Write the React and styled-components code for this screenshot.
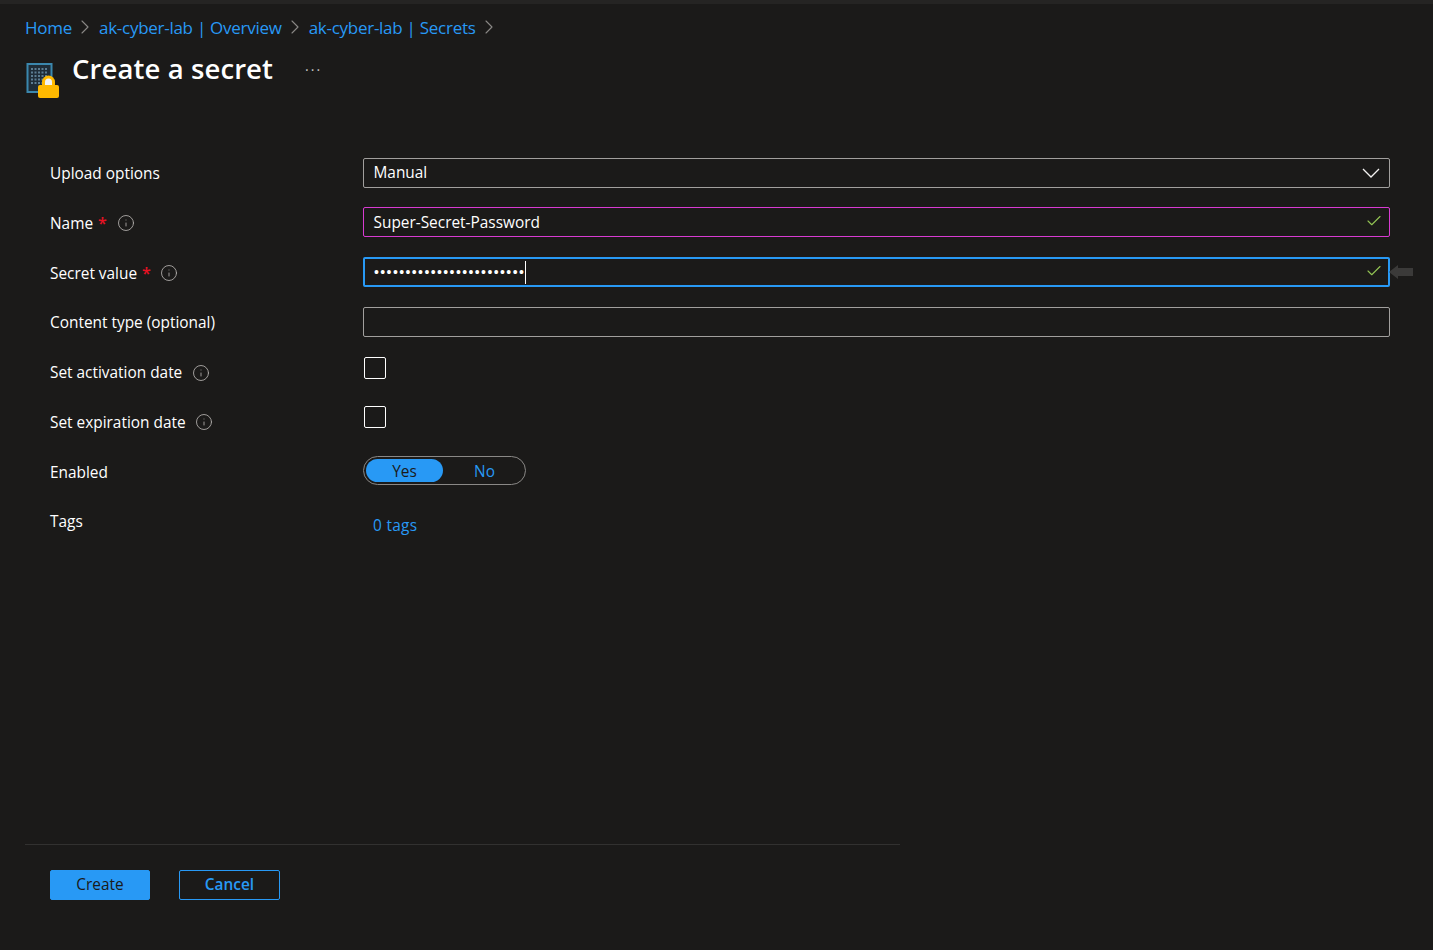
import React from 'react'
import styled, { createGlobalStyle } from 'styled-components'
import { ChevronRight, Check, Info } from 'lucide-react'

const GlobalStyle = createGlobalStyle`
  html, body {
    margin: 0;
    padding: 0;
    background: #1b1a19;
  }

  body {
    font-family: 'Open Sans', 'Noto Sans', 'Liberation Sans', sans-serif;
    color: #fff;
  }
`

const Page = styled.div`
  width: 1433px;
  height: 950px;
  display: flex;
  flex-direction: column;
  overflow: hidden;
  background: #1b1a19;
  border-top: 4px solid #252423;
  box-sizing: border-box;
`

const Breadcrumbs = styled.nav`
  display: flex;
  align-items: center;
  height: 24px;
  margin: 11px 0 0 25px;
  font-size: 17px;
  letter-spacing: -0.27px;
`

const Crumb = styled.a`
  color: #2899f5;
`

const CrumbArrow = styled(ChevronRight)`
  width: 24px;
  height: 24px;
  margin: 0 1.5px;
  color: #8a8886;
  stroke-width: 1.1;
`

const Header = styled.header`
  display: flex;
  align-items: flex-start;
  height: 56px;
  margin: 10px 0 0 25px;
`

const BladeIcon = styled.svg`
  width: 36px;
  height: 38px;
  margin-top: 13px;
  flex: none;
`

const Title = styled.h1`
  margin: 0 0 0 11px;
  font-size: 27.5px;
  line-height: 39px;
  font-weight: 600;
  letter-spacing: 0.1px;
`

const MoreDots = styled.span`
  margin: 7px 0 0 32px;
  font-size: 14px;
  letter-spacing: 2px;
  line-height: 20px;
  color: #c8c6c4;
`

const Form = styled.form`
  display: grid;
  grid-template-columns: 313px 1027px;
  grid-auto-rows: 30px;
  row-gap: 19.75px;
  margin: 52.5px 0 0 50px;
`

const Label = styled.div`
  display: flex;
  align-items: center;
  height: 30px;
  box-sizing: border-box;
  padding-top: 2px;
  font-size: 15.4px;
  color: #fff;
`

const Required = styled.span`
  margin: 0 0 0 5px;
  color: #e81123;
  font-size: 16px;
  line-height: 16px;
  font-weight: 600;
`

const InfoIcon = styled(Info)`
  width: 18px;
  height: 18px;
  margin-left: ${(p) => p.$gap || 9}px;
  color: #b3b0ad;
  stroke-width: 1.15;
`

const Field = styled.div`
  position: relative;
  display: flex;
  align-items: center;
  justify-content: space-between;
  height: 30px;
  box-sizing: border-box;
  padding: 0 6px 0 9.5px;
  border-radius: 2px;
  font-size: 15.4px;
  border: 1px solid ${(p) => p.$border || '#a19f9d'};
  ${(p) => p.$focused && 'border-width: 2px; padding-left: 9px; padding-right: 5px;'}
`

const Dots = styled.span`
  display: flex;
  align-items: center;
  font-family: 'Liberation Sans', sans-serif;
  font-size: 14px;
  letter-spacing: 1.4px;
`

const Caret = styled.span`
  width: 1px;
  height: 23px;
  margin-left: 0;
  background: #fff;
`

const ValidIcon = styled(Check)`
  width: 18px;
  height: 18px;
  margin-top: -3px;
  color: #92c353;
  stroke-width: 1.5;
`

const SelectChevron = styled.svg`
  width: 18px;
  height: 10px;
  margin-right: 3px;
  fill: none;
  stroke: #f3f2f1;
  stroke-width: 1.3;
`

const HintArrow = styled.svg`
  position: absolute;
  left: 100%;
  top: 6px;
  width: 26px;
  height: 14px;
  margin-left: 1px;
`

const CheckBox = styled.div`
  width: 22px;
  height: 22px;
  box-sizing: border-box;
  margin-left: 1px;
  border: 1px solid #fff;
  border-radius: 2px;
`

const Toggle = styled.div`
  display: flex;
  align-items: center;
  width: 163px;
  height: 29px;
  box-sizing: border-box;
  padding: 2px;
  border: 1px solid #8a8886;
  border-radius: 15px;
  font-size: 15.4px;
`

const ToggleOption = styled.div`
  display: flex;
  align-items: center;
  justify-content: center;
  flex: ${(p) => (p.$active ? '0 0 77px' : '1')};
  height: 23px;
  padding-top: 1px;
  padding-left: ${(p) => (p.$active ? 0 : 3)}px;
  box-sizing: border-box;
  border-radius: 12px;
  color: ${(p) => (p.$active ? '#1b1a19' : '#2899f5')};
  background: ${(p) => (p.$active ? '#2899f5' : 'transparent')};
`

const TagsLink = styled.a`
  display: block;
  margin: 9px 0 0 10px;
  font-size: 15.4px;
  line-height: 22px;
  letter-spacing: 0.3px;
  color: #2899f5;
`

const Footer = styled.footer`
  width: 875px;
  margin: auto 0 50px 25px;
  border-top: 1px solid #323130;
`

const Actions = styled.div`
  display: flex;
  gap: 29px;
  padding: 25px 0 0 25px;
`

const Button = styled.button`
  width: ${(p) => (p.$primary ? 100 : 101)}px;
  height: 30px;
  padding: 0 0 2px;
  border: 1px solid #2899f5;
  border-radius: 2px;
  font-family: inherit;
  font-size: 15.4px;
  font-weight: ${(p) => (p.$primary ? 400 : 600)};
  color: ${(p) => (p.$primary ? '#1b1a19' : '#2899f5')};
  background: ${(p) => (p.$primary ? '#2899f5' : 'transparent')};
`

const KeyVaultLock = () => (
  <BladeIcon viewBox="0 0 36 38">
    <rect x="2.5" y="2" width="24" height="28" fill="#1f2d38" stroke="#3b87ad" strokeWidth="2" />
    {[6, 9.5, 13, 16.5, 20].map((y) =>
      [6, 9.5, 13, 16.5, 20].map((x) => (
        <rect key={`${x}-${y}`} x={x} y={y} width="2" height="2" fill="#5c7d92" />
      ))
    )}
    <path d="M17 24v-4a6.5 6.5 0 0 1 13 0v4z" fill="#ffb900" />
    <path d="M20 24v-4a3.5 3.5 0 0 1 7 0v4z" fill="#f2f2f2" />
    <rect x="13" y="23" width="21" height="13" rx="2" fill="#ffb900" />
  </BladeIcon>
)

const App = () => (
  <Page>
    <GlobalStyle />
    <Breadcrumbs>
      <Crumb>Home</Crumb>
      <CrumbArrow />
      <Crumb>ak-cyber-lab | Overview</Crumb>
      <CrumbArrow />
      <Crumb>ak-cyber-lab | Secrets</Crumb>
      <CrumbArrow />
    </Breadcrumbs>

    <Header>
      <KeyVaultLock />
      <Title>Create a secret</Title>
      <MoreDots>...</MoreDots>
    </Header>

    <Form>
      <Label>Upload options</Label>
      <Field>
        Manual
        <SelectChevron viewBox="0 0 18 10">
          <path d="M1 1l8 8 8-8" />
        </SelectChevron>
      </Field>

      <Label>
        Name<Required>*</Required>
        <InfoIcon $gap={10} />
      </Label>
      <Field $border="#d83bd2">
        Super-Secret-Password
        <ValidIcon />
      </Field>

      <Label>
        Secret value<Required>*</Required>
        <InfoIcon $gap={9} />
      </Label>
      <Field $focused $border="#2899f5">
        <Dots>
          {'•'.repeat(24)}
          <Caret />
        </Dots>
        <ValidIcon />
        <HintArrow viewBox="0 0 26 14">
          <path d="M0 7 9 0v3h15v8H9v3z" fill="#3b3a39" />
        </HintArrow>
      </Field>

      <Label>Content type (optional)</Label>
      <Field />

      <Label>
        Set activation date
        <InfoIcon $gap={10} />
      </Label>
      <div>
        <CheckBox />
      </div>

      <Label>
        Set expiration date
        <InfoIcon />
      </Label>
      <div>
        <CheckBox />
      </div>

      <Label>Enabled</Label>
      <Toggle>
        <ToggleOption $active>Yes</ToggleOption>
        <ToggleOption>No</ToggleOption>
      </Toggle>

      <Label>Tags</Label>
      <TagsLink>0 tags</TagsLink>
    </Form>

    <Footer>
      <Actions>
        <Button type="button" $primary>
          Create
        </Button>
        <Button type="button">Cancel</Button>
      </Actions>
    </Footer>
  </Page>
)

export default App
